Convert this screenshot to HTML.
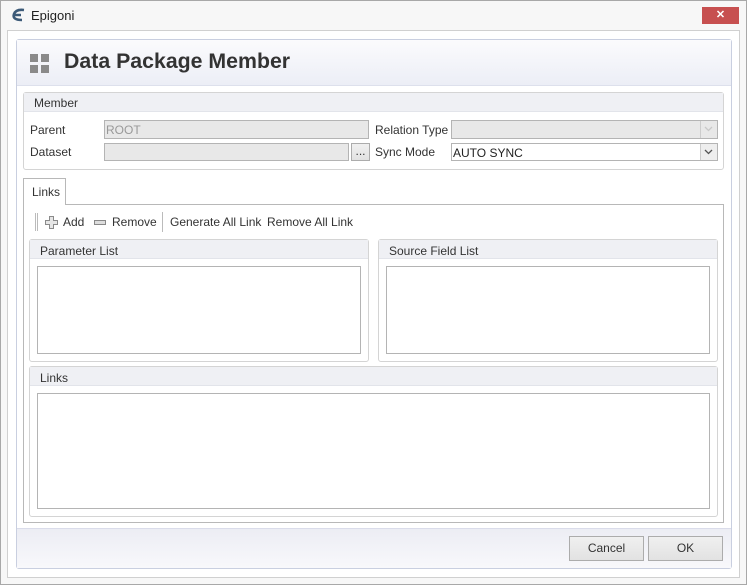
<!DOCTYPE html>
<html><head><meta charset="utf-8"><style>
*{box-sizing:border-box;margin:0;padding:0}
body{width:747px;height:585px;position:relative;background:#f7f7f7;font-family:"Liberation Sans",sans-serif;font-size:12px;color:#222;overflow:hidden}
.a{position:absolute}
.t{position:absolute;white-space:nowrap;font-size:12px;color:#333}
.box{position:absolute;border:1px solid #b4b4b4;background:#fff}
.grp{position:absolute;border:1px solid #d4d4d4;border-radius:3px;background:#fff}
.gh{position:absolute;left:0;right:0;top:0;height:19px;background:#eff0f4;border-bottom:1px solid #e2e4ea}
.btn{position:absolute;border:1px solid #acacac;background:linear-gradient(#f0f0f0,#e2e2e2);text-align:center;line-height:22px;font-size:12px;color:#333}
</style></head><body>
<div class="a" style="left:0;top:0;width:747px;height:585px;border:1px solid #a8a8a8"></div>
<svg class="a" style="left:10px;top:8px" width="16" height="14"><path d="M14 2 Q6 1 4 6 Q2 12 12 12 M3 7 H11" stroke="#3c5a78" stroke-width="2.6" fill="none"/></svg>
<div class="t" style="left:31px;top:8px;font-size:13px;color:#222">Epigoni</div>
<div class="a" style="left:702px;top:7px;width:37px;height:17px;background:#c75050;color:#fff;text-align:center;font-size:11px;line-height:17px;font-weight:bold">✕</div>
<div class="a" style="left:7px;top:30px;width:733px;height:548px;border:1px solid #d0d0d0;background:#fff"></div>
<div class="a" style="left:16px;top:39px;width:716px;height:530px;border:1px solid #c9cfe0;border-radius:3px;background:#fff"></div>
<div class="a" style="left:17px;top:40px;width:714px;height:46px;background:linear-gradient(#fbfbfd,#eceef6);border-bottom:1px solid #dde0ec"></div>
<div class="a" style="left:30px;top:54px;width:8px;height:8px;background:#8a8a8a"></div>
<div class="a" style="left:41px;top:54px;width:8px;height:8px;background:#8a8a8a"></div>
<div class="a" style="left:30px;top:65px;width:8px;height:8px;background:#8a8a8a"></div>
<div class="a" style="left:41px;top:65px;width:8px;height:8px;background:#8a8a8a"></div>
<div class="t" style="left:64px;top:49px;font-size:21.3px;font-weight:bold;color:#333">Data Package Member</div>

<div class="grp" style="left:23px;top:92px;width:701px;height:78px"><div class="gh"></div></div>
<div class="t" style="left:34px;top:96px">Member</div>
<div class="t" style="left:30px;top:123px">Parent</div>
<div class="box" style="left:104px;top:120px;width:265px;height:19px;background:#e8e8e8"></div>
<div class="t" style="left:106px;top:123px;color:#999">ROOT</div>
<div class="t" style="left:30px;top:145px">Dataset</div>
<div class="box" style="left:104px;top:143px;width:245px;height:18px;background:#e8e8e8"></div>
<div class="btn" style="left:351px;top:143px;width:19px;height:18px;line-height:14px">...</div>
<div class="t" style="left:375px;top:123px">Relation Type</div>
<div class="box" style="left:451px;top:120px;width:267px;height:19px;background:#e8e8e8"></div>
<div class="a" style="left:700px;top:121px;width:1px;height:17px;background:#ccc"></div>
<svg class="a" style="left:704px;top:126px" width="9" height="6"><path d="M1 1L4.5 4.5L8 1" stroke="#c8c8c8" fill="none" stroke-width="1.3"/></svg>
<div class="t" style="left:375px;top:145px">Sync Mode</div>
<div class="box" style="left:451px;top:143px;width:267px;height:18px"></div>
<div class="t" style="left:453px;top:146px;color:#222">AUTO SYNC</div>
<div class="a" style="left:700px;top:144px;width:17px;height:16px;background:#eee;border-left:1px solid #ccc"></div>
<svg class="a" style="left:704px;top:149px" width="9" height="6"><path d="M1 1L4.5 4.5L8 1" stroke="#555" fill="none" stroke-width="1.3"/></svg>

<div class="a" style="left:23px;top:204px;width:701px;height:319px;border:1px solid #b8b8b8;background:#fff"></div>
<div class="a" style="left:23px;top:178px;width:43px;height:27px;border:1px solid #b8b8b8;border-bottom:none;background:#fff"></div>
<div class="t" style="left:32px;top:185px">Links</div>
<div class="a" style="left:35px;top:213px;width:3px;height:18px;border-left:1px solid #bbb;border-right:1px solid #bbb"></div>
<svg class="a" style="left:45px;top:216px" width="13" height="13"><path d="M4.5 .5H8.5V4.5H12.5V8.5H8.5V12.5H4.5V8.5H.5V4.5H4.5Z" fill="#e6e6e6" stroke="#8a8a8a"/></svg>
<div class="t" style="left:63px;top:215px">Add</div>
<div class="a" style="left:94px;top:220px;width:12px;height:5px;background:#ddd;border:1px solid #888"></div>
<div class="t" style="left:112px;top:215px">Remove</div>
<div class="a" style="left:162px;top:212px;width:1px;height:20px;background:#bbb"></div>
<div class="t" style="left:170px;top:215px">Generate All Link</div>
<div class="t" style="left:267px;top:215px">Remove All Link</div>

<div class="grp" style="left:29px;top:239px;width:340px;height:123px"><div class="gh"></div></div>
<div class="t" style="left:40px;top:244px">Parameter List</div>
<div class="box" style="left:37px;top:266px;width:324px;height:88px"></div>
<div class="grp" style="left:378px;top:239px;width:340px;height:123px"><div class="gh"></div></div>
<div class="t" style="left:389px;top:244px">Source Field List</div>
<div class="box" style="left:386px;top:266px;width:324px;height:88px"></div>
<div class="grp" style="left:29px;top:366px;width:689px;height:151px"><div class="gh"></div></div>
<div class="t" style="left:40px;top:371px">Links</div>
<div class="box" style="left:37px;top:393px;width:673px;height:116px"></div>

<div class="a" style="left:17px;top:528px;width:714px;height:40px;background:linear-gradient(#ecedf4,#f8f8fb);border-top:1px solid #dadcea"></div>
<div class="btn" style="left:569px;top:536px;width:75px;height:25px">Cancel</div>
<div class="btn" style="left:648px;top:536px;width:75px;height:25px">OK</div>
</body></html>
